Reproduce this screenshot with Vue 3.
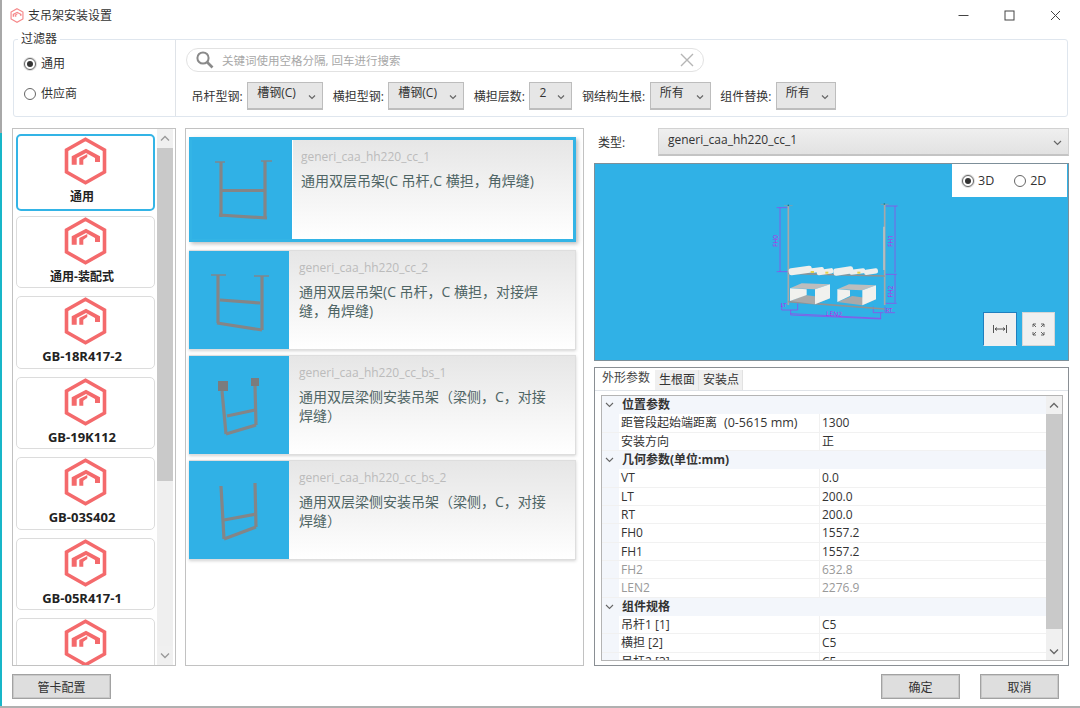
<template>
  <div class="window">
    <i class="edge-top"></i>
    <i class="edge-side"></i>
    <i class="edge-bottom"></i>

    <svg width="0" height="0" class="defs">
      <symbol id="logo" viewBox="0 0 43 48">
        <polygon points="21.5,2.3 40.5,13 40.5,35 21.5,45.7 2.5,35 2.5,13" fill="none" stroke="#f46a6c" stroke-width="3.6" />
        <polygon points="7.7,19.3 22,11.7 36,19.3 36,25 31,25 31,21 22,16 12.7,21 12.7,27.7 7.7,27.7" fill="#f46a6c" />
        <polygon points="15.3,21 23.3,17 23.3,20 19.3,22.7 19.3,27.7 15.3,27.7" fill="#f46a6c" />
      </symbol>
    </svg>

    <header class="titlebar">
      <svg class="title-icon" width="14" height="15"><use href="#logo" /></svg>
      <span class="title-text">支吊架安装设置</span>
      <div class="win-controls">
        <svg width="11" height="11" viewBox="0 0 11 11"><path d="M0.5 5.5h10" stroke="#444" fill="none" /></svg>
        <svg width="11" height="11" viewBox="0 0 11 11"><rect x="1" y="1" width="9" height="9" stroke="#444" fill="none" /></svg>
        <svg width="11" height="11" viewBox="0 0 11 11"><path d="M1 1l9 9M10 1l-9 9" stroke="#444" fill="none" /></svg>
      </div>
    </header>

    <section class="filter">
      <span class="legend">过滤器</span>
      <div class="filter-left">
        <label class="radio-row"><span class="radio checked"></span>通用</label>
        <label class="radio-row"><span class="radio"></span>供应商</label>
      </div>
      <div class="filter-right">
        <div class="search">
          <svg width="20" height="20" viewBox="0 0 20 20" class="search-icon">
            <circle cx="8" cy="8" r="5.6" fill="none" stroke="#8a8a8a" stroke-width="2" />
            <path d="M12 12l5.5 5.5" stroke="#8a8a8a" stroke-width="2.6" fill="none" />
          </svg>
          <span class="placeholder">关键词使用空格分隔, 回车进行搜索</span>
          <svg width="14" height="14" viewBox="0 0 14 14" class="clear-icon">
            <path d="M1 1l12 12M13 1l-12 12" stroke="#b5b5b5" stroke-width="1.4" fill="none" />
          </svg>
        </div>
        <div class="combos">
          <div v-for="c in combos" :key="c.label" class="combo-item">
            <span class="combo-label">{{ c.label }}</span>
            <div class="combo" :class="c.cls">
              <span>{{ c.value }}</span>
              <svg width="8" height="6" viewBox="0 0 8 6"><path d="M1 1.5l3 3 3-3" stroke="#666" fill="none" stroke-width="1.2" /></svg>
            </div>
          </div>
        </div>
      </div>
    </section>

    <main class="content">
      <aside class="vendor-panel">
        <div class="vendor-list">
          <div v-for="(v, i) in vendors" :key="i" class="vendor" :class="{ active: i === 0 }">
            <svg class="vendor-logo" width="43" height="48"><use href="#logo" /></svg>
            <span class="vendor-name" :class="{ code: v.startsWith('GB') }">{{ v }}</span>
          </div>
        </div>
        <div class="scrollbar">
          <div class="sb-btn">
            <svg width="10" height="7" viewBox="0 0 10 7"><path d="M1 5.5l4-4 4 4" stroke="#999" fill="none" stroke-width="1.3" /></svg>
          </div>
          <div class="sb-thumb vendor-thumb"></div>
          <div class="sb-track"></div>
          <div class="sb-btn">
            <svg width="10" height="7" viewBox="0 0 10 7"><path d="M1 1.5l4 4 4-4" stroke="#999" fill="none" stroke-width="1.3" /></svg>
          </div>
        </div>
      </aside>

      <section class="card-panel">
        <article v-for="(c, i) in cards" :key="c.code" class="card" :class="{ selected: i === 0 }">
          <div class="thumb">
            <svg width="100" height="100" viewBox="0 0 100 100">
              <g fill="none" stroke="#848587">
                <path v-for="(p, j) in c.thin" :key="j" :d="p" stroke-width="1.4" />
                <path v-for="(p, j) in c.thick" :key="'t' + j" :d="p" stroke-width="3.2" />
              </g>
              <rect v-for="(r, j) in c.plates" :key="'r' + j" :x="r[0]" :y="r[1]" :width="r[2]" :height="r[3]" fill="#7b7c7e" />
            </svg>
          </div>
          <div class="card-body">
            <div class="card-code">{{ c.code }}</div>
            <div class="card-title">{{ c.title }}</div>
          </div>
        </article>
      </section>

      <section class="detail">
        <div class="type-row">
          <span class="type-label">类型:</span>
          <div class="type-select">
            <span>generi_caa_hh220_cc_1</span>
            <svg width="9" height="6" viewBox="0 0 9 6"><path d="M1 1l3.5 3.5L8 1" stroke="#666" fill="none" stroke-width="1.2" /></svg>
          </div>
        </div>

        <div class="preview">
          <svg class="scene" width="140" height="130" viewBox="0 0 420 390">
            <g fill="none" stroke="#c21fe8" stroke-width="1.6">
              <path d="M50 38h35M60 38v192M50 230h35" />
              <path d="M375 33h38M405 33v200M375 238h35M405 238v85M375 325h35" />
              <path d="M65 325v20h48v-20M340 335v18h30M375 335v18h30" />
              <path d="M92 345v15l270 12v-18M92 356l270 14" />
            </g>
            <text x="54" y="138" class="dim" transform="rotate(-90 54 138)" text-anchor="middle">FH0</text>
            <text x="400" y="138" class="dim" transform="rotate(-90 400 138)" text-anchor="middle">FH1</text>
            <text x="400" y="290" class="dim" transform="rotate(-90 400 290)" text-anchor="middle">FH2</text>
            <text x="222" y="364" class="dim" transform="rotate(3 222 364)" text-anchor="middle">LEN2</text>
            <text x="62" y="335" class="dim small">LT</text>
            <text x="378" y="352" class="dim small">RT</text>

            <path d="M85 32V330" stroke="#a8a8a8" stroke-width="5" />
            <path d="M374 28V330" stroke="#a8a8a8" stroke-width="5" />
            <path d="M372 95v130" stroke="#bfbfbf" stroke-width="5" />
            <path d="M72 32h26M362 28h24" stroke="#9a9a9a" stroke-width="2" />
            <circle cx="85" cy="31" r="2.5" fill="#0c7c86" />
            <circle cx="373" cy="27" r="2.5" fill="#0c7c86" />
            <path d="M85 235L374 243" stroke="#929292" stroke-width="5" />
            <path d="M85 320L374 342" stroke="#929292" stroke-width="5" />

            <g fill="#efefec">
              <rect x="86" y="216" width="70" height="21" rx="8" transform="rotate(-8 120 226)" />
              <rect x="150" y="218" width="42" height="14" rx="6" transform="rotate(-8 170 225)" />
              <rect x="170" y="222" width="50" height="16" rx="6" transform="rotate(-8 195 230)" />
              <rect x="220" y="217" width="60" height="22" rx="8" transform="rotate(-8 250 228)" />
              <rect x="268" y="222" width="48" height="15" rx="6" transform="rotate(-8 292 230)" />
              <rect x="312" y="222" width="42" height="16" rx="6" transform="rotate(-8 332 230)" />
            </g>
            <g fill="#e6d24a">
              <rect x="152" y="228" width="10" height="6" />
              <rect x="196" y="230" width="9" height="6" />
              <rect x="292" y="230" width="9" height="6" />
            </g>

            <g>
              <polygon points="90,280 125,265 210,268 165,283" fill="#bdbdbd" />
              <polygon points="90,318 135,300 210,310 165,328" fill="#a9a9a9" />
              <polygon points="90,280 140,283 140,300 90,318" fill="#f1f1ee" />
              <polygon points="165,283 210,268 210,310 165,328" fill="#f1f1ee" />
            </g>
            <g transform="translate(142 3)">
              <polygon points="90,280 125,265 206,268 165,283" fill="#bdbdbd" />
              <polygon points="90,318 135,300 206,310 165,328" fill="#a9a9a9" />
              <polygon points="90,280 128,283 128,300 90,318" fill="#f1f1ee" />
              <polygon points="165,283 206,268 206,310 165,328" fill="#f1f1ee" />
            </g>
          </svg>

          <div class="view-switch">
            <label class="radio-row"><span class="radio checked"></span>3D</label>
            <label class="radio-row"><span class="radio"></span>2D</label>
          </div>
          <div class="view-tools">
            <button class="tool first">
              <svg width="14" height="10" viewBox="0 0 14 10"><path d="M0.5 1v8M13.5 1v8M2 5h10M4 3.5L2 5l2 1.5M10 3.5L12 5l-2 1.5" stroke="#444" fill="none" stroke-width="0.9" /></svg>
            </button>
            <button class="tool">
              <svg width="13" height="13" viewBox="0 0 13 13"><path d="M1 4V1h3M1 1l3 3M12 4V1H9M12 1L9 4M1 9v3h3M1 12l3-3M12 9v3H9M12 12L9 9" stroke="#555" fill="none" stroke-width="0.9" /></svg>
            </button>
          </div>
        </div>

        <div class="params">
          <div class="tabs">
            <span class="tab current">外形参数</span>
            <span class="tab">生根面</span>
            <span class="tab">安装点</span>
          </div>
          <div class="grid-box">
            <div class="grid">
              <template v-for="(r, i) in rows" :key="i">
                <div v-if="r.group" class="row group">
                  <span class="gutter">
                    <svg width="9" height="6" viewBox="0 0 9 6"><path d="M1 1l3.5 3.5L8 1" stroke="#666" fill="none" stroke-width="1.1" /></svg>
                  </span>
                  <span class="group-name">{{ r.group }}</span>
                </div>
                <div v-else class="row" :class="{ muted: r.muted }">
                  <span class="gutter"></span>
                  <span class="cell name">{{ r.name }}<span v-if="r.note" class="note">{{ r.note }}</span></span>
                  <span class="cell value">{{ r.value }}</span>
                </div>
              </template>
            </div>
            <div class="scrollbar grid-scroll">
              <div class="sb-btn small">
                <svg width="10" height="7" viewBox="0 0 10 7"><path d="M1 5.5l4-4 4 4" stroke="#666" fill="none" stroke-width="1.3" /></svg>
              </div>
              <div class="sb-thumb grid-thumb"></div>
              <div class="sb-track"></div>
              <div class="sb-btn small">
                <svg width="10" height="7" viewBox="0 0 10 7"><path d="M1 1.5l4 4 4-4" stroke="#666" fill="none" stroke-width="1.3" /></svg>
              </div>
            </div>
          </div>
        </div>
      </section>
    </main>

    <footer class="footer">
      <button class="btn wide">管卡配置</button>
      <div class="footer-right">
        <button class="btn">确定</button>
        <button class="btn">取消</button>
      </div>
    </footer>
  </div>
</template>

<script setup>
const combos = [
  { label: '吊杆型钢:', value: '槽钢(C)', cls: 'w76' },
  { label: '横担型钢:', value: '槽钢(C)', cls: 'w76' },
  { label: '横担层数:', value: '2', cls: 'w43' },
  { label: '钢结构生根:', value: '所有', cls: 'w61' },
  { label: '组件替换:', value: '所有', cls: 'w60' }
]

const vendors = ['通用', '通用-装配式', 'GB-18R417-2', 'GB-19K112', 'GB-03S402', 'GB-05R417-1', '']

const cards = [
  {
    code: 'generi_caa_hh220_cc_1',
    title: '通用双层吊架(C 吊杆,C 横担，角焊缝)',
    thin: ['M23 22h10', 'M69 21h11'],
    thick: ['M29 22V77', 'M73 21V79', 'M30 50.5h42', 'M27 75l48 3'],
    plates: []
  },
  {
    code: 'generi_caa_hh220_cc_2',
    title: '通用双层吊架(C 吊杆，C 横担，对接焊缝，角焊缝)',
    thin: ['M22 24h15', 'M65 25h15'],
    thick: ['M29 24V72', 'M73 25V79', 'M31 49l40 3', 'M28 72l45 7'],
    plates: []
  },
  {
    code: 'generi_caa_hh220_cc_bs_1',
    title: '通用双层梁侧安装吊架（梁侧，C，对接焊缝）',
    thin: [],
    thick: ['M33 35L37 78', 'M66 30L67 69', 'M38 60L66 54', 'M37 78L67 69'],
    plates: [[29, 25, 10, 10], [62, 22, 8, 8]]
  },
  {
    code: 'generi_caa_hh220_cc_bs_2',
    title: '通用双层梁侧安装吊架（梁侧，C，对接焊缝）',
    thin: [],
    thick: ['M32 25L35 78', 'M66 22L67 66', 'M35 59L67 53', 'M35 78L67 66'],
    plates: []
  }
]

const rows = [
  { group: '位置参数' },
  { name: '距管段起始端距离', note: '(0-5615 mm)', value: '1300' },
  { name: '安装方向', value: '正' },
  { group: '几何参数(单位:mm)' },
  { name: 'VT', value: '0.0' },
  { name: 'LT', value: '200.0' },
  { name: 'RT', value: '200.0' },
  { name: 'FH0', value: '1557.2' },
  { name: 'FH1', value: '1557.2' },
  { name: 'FH2', value: '632.8', muted: true },
  { name: 'LEN2', value: '2276.9', muted: true },
  { group: '组件规格' },
  { name: '吊杆1 [1]', value: 'C5' },
  { name: '横担 [2]', value: 'C5' },
  { name: '吊杆2 [3]', value: 'C5' }
]
</script>

<style>
html, body {
  margin: 0;
  background: #fff;
  overflow: hidden;
}
</style>

<style scoped>
.window {
  position: relative;
  width: 1080px;
  height: 708px;
  overflow: hidden;
  background: #fff;
  font-family: "Open Sans", "Noto Sans CJK SC", sans-serif;
  font-size: 12px;
  color: #333;
  box-sizing: border-box;
  padding-left: 12px;
}

.edge-top, .edge-side, .edge-bottom {
  position: absolute;
  left: 0;
}
.edge-top { top: 0; width: 2px; height: 133px; background: #a8a8a8; }
.edge-side { top: 133px; width: 2px; height: 573px; background: #18b6c8; }
.edge-bottom { top: 706px; width: 100%; height: 2px; background: #b0b0b0; }

.defs { position: absolute; }

.titlebar {
  height: 30px;
  margin-left: -2px;
  display: flex;
  align-items: center;
}
.title-icon { margin-right: 4px; opacity: 0.8; }
.title-text { color: #333; }
.win-controls {
  margin-left: auto;
  display: flex;
  gap: 35px;
  padding-right: 19px;
}

.filter {
  position: relative;
  margin: 9px 12px 0 1px;
  height: 78px;
  display: flex;
  border: 1px solid #dfe6ee;
  border-radius: 3px;
  box-sizing: border-box;
}
.legend {
  position: absolute;
  top: -8px;
  left: 4px;
  padding: 0 3px;
  background: #fff;
  line-height: 14px;
}
.filter-left {
  width: 162px;
  box-sizing: border-box;
  border-right: 1px solid #dfe3e8;
  padding: 15px 0 0 10px;
  display: flex;
  flex-direction: column;
  gap: 12px;
}
.radio-row {
  display: flex;
  align-items: center;
  gap: 5px;
  height: 18px;
  line-height: 18px;
}
.radio {
  width: 12px;
  height: 12px;
  border: 1px solid #666;
  border-radius: 50%;
  background: #fff;
  box-sizing: border-box;
  position: relative;
}
.radio.checked {
  box-shadow: 0 0 0 1px #ddd;
}
.radio.checked::after {
  content: "";
  position: absolute;
  left: 2px;
  top: 2px;
  width: 6px;
  height: 6px;
  border-radius: 50%;
  background: #333;
}

.filter-right {
  flex: 1;
  padding: 8px 0 0 10px;
}
.search {
  width: 518px;
  height: 24px;
  box-sizing: border-box;
  border: 1px solid #e2e2e2;
  border-radius: 12px;
  display: flex;
  align-items: center;
  padding-left: 8px;
  padding-right: 9px;
}
.search-icon { flex: none; }
.placeholder {
  margin-left: 7px;
  color: #a8a8a8;
  font-size: 11.5px;
}
.clear-icon { margin-left: auto; }

.combos {
  display: flex;
  margin-top: 10px;
  padding-left: 5.5px;
  gap: 9.5px;
}
.combo-item {
  display: flex;
  align-items: center;
  gap: 4.5px;
}
.combo-label { white-space: nowrap; }
.combo {
  height: 28px;
  box-sizing: border-box;
  border: 1px solid #bdbdbd;
  border-bottom-width: 2px;
  background: #e6e6e6;
  display: flex;
  justify-content: space-between;
  padding: 1px 6px 0 9px;
  line-height: 18px;
}
.combo svg { margin-top: 10px; }
.w76 { width: 76px; }
.w43 { width: 43px; }
.w61 { width: 61px; }
.w60 { width: 60px; }

.content {
  margin-top: 11px;
  height: 538px;
  display: flex;
  gap: 9px;
}

.vendor-panel {
  width: 164px;
  box-sizing: border-box;
  border: 1px solid #c2c2c2;
  display: flex;
  overflow: hidden;
}
.vendor-list {
  width: 144px;
  padding: 5px 0 0 3px;
  box-sizing: border-box;
  overflow: hidden;
}
.vendor {
  height: 72.4px;
  width: 139px;
  margin-bottom: 8px;
  box-sizing: border-box;
  border: 1px solid #dcdcdc;
  border-radius: 5px;
  display: flex;
  flex-direction: column;
  align-items: center;
}
.vendor.active {
  height: 77px;
  margin-bottom: 5px;
  border: 2px solid #33b4e6;
  padding-top: 1px;
}
.vendor-logo { flex: none; }
.vendor-name {
  margin: 3px 7px 0 0;
  font-weight: 700;
  color: #222;
  line-height: 17px;
  white-space: nowrap;
}
.vendor-name.code { font-size: 13px; }

.scrollbar {
  width: 16px;
  flex: none;
  background: #efefef;
  display: flex;
  flex-direction: column;
}
.sb-btn {
  height: 19px;
  flex: none;
  display: flex;
  align-items: center;
  justify-content: center;
  background: #f0f0f0;
}
.sb-thumb { background: #c9c9c9; }
.vendor-thumb { height: 333px; }
.sb-track { flex: 1; }

.card-panel {
  width: 399px;
  box-sizing: border-box;
  border: 1px solid #c2c2c2;
  padding: 8px 0 0 3px;
}
.card {
  width: 387px;
  height: 100px;
  box-sizing: border-box;
  margin-bottom: 5px;
  display: flex;
  border: 1px solid #dedede;
  border-left: none;
  background: linear-gradient(#e6e6e6, #fff);
  box-shadow: 0 1px 3px rgba(0, 0, 0, 0.18);
}
.card.selected {
  height: 105px;
  margin-bottom: 8px;
  border: 3px solid #33b4e6;
  box-shadow: 2px 2px 4px rgba(0, 0, 0, 0.25);
}
.thumb {
  width: 100px;
  flex: none;
  background: #30b1e6;
}
.card.selected .thumb {
  border-right: 1px solid #fff;
}
.card-body {
  padding: 8px 22px 0 10px;
}
.card.selected .card-body {
  padding-left: 8px;
}
.card-code {
  color: #bbb;
  font-size: 12px;
  line-height: 18px;
  white-space: nowrap;
}
.card-title {
  margin-top: 5px;
  font-size: 14px;
  line-height: 19px;
  color: #4f6565;
}

.detail {
  width: 475px;
  margin-left: 1px;
}
.type-row {
  height: 28px;
  display: flex;
  align-items: center;
}
.type-label {
  margin-left: 4px;
  width: 60px;
}
.type-select {
  flex: 1;
  height: 28px;
  box-sizing: border-box;
  border: 1px solid #d2d2d2;
  border-bottom: 2px solid #c4c4c4;
  background: linear-gradient(#efefef, #e2e2e2);
  display: flex;
  justify-content: space-between;
  padding: 1px 6px 0 9px;
  line-height: 20px;
  color: #333;
}
.type-select svg { margin-top: 10px; }

.preview {
  position: relative;
  margin-top: 7px;
  height: 198px;
  box-sizing: border-box;
  border: 1px solid #7d8f99;
  background: #30b1e6;
}
.scene {
  position: absolute;
  left: 165px;
  top: 31px;
}
.dim {
  fill: #c21fe8;
  font-size: 20px;
}
.dim.small { font-size: 16px; }
.view-switch {
  position: absolute;
  top: 0;
  right: 1px;
  width: 115px;
  height: 33px;
  background: #fff;
  box-sizing: border-box;
  display: flex;
  align-items: center;
  gap: 20px;
  padding-left: 10px;
  font-size: 12.5px;
}
.view-switch .radio-row { gap: 4px; }
.view-tools {
  position: absolute;
  right: 13px;
  top: 148px;
  display: flex;
  gap: 5px;
}
.tool {
  width: 33px;
  height: 34px;
  padding: 0;
  background: #f0f0f0;
  border: 1px solid #d6d6d6;
  display: flex;
  align-items: center;
  justify-content: center;
}
.tool.first {
  width: 34px;
  border-color: #1f7fbf #1f7fbf #f0f0f0 #1f7fbf;
}

.params {
  margin-top: 6px;
  height: 299px;
  box-sizing: border-box;
  border: 1px solid #8a8f94;
}
.tabs {
  height: 22px;
  display: flex;
  align-items: flex-end;
  padding-left: 2px;
  border-bottom: 1px solid #dfe3e8;
}
.tab {
  height: 20px;
  line-height: 20px;
  padding: 0 4px;
  background: #f0f0f0;
  border-right: 1px solid #e2e2e2;
  box-sizing: border-box;
  width: 44px;
  text-align: center;
  white-space: nowrap;
}
.tab.current {
  width: 58px;
  height: 22px;
  line-height: 20px;
  background: #fff;
  padding: 0;
  border-right: none;
  color: #444;
}
.grid-box {
  margin: 4px 5px 0 6px;
  height: 266px;
  box-sizing: border-box;
  border: 1px solid #b4b4b4;
  display: flex;
  overflow: hidden;
}
.grid {
  flex: 1;
  overflow: hidden;
}
.row {
  display: flex;
  height: 18.35px;
  line-height: 18px;
  box-sizing: border-box;
  border-bottom: 1px solid #f1f1f1;
  color: #333;
}
.row.muted { color: #999; }
.row.group {
  background: #f3f6fb;
  border-bottom: none;
}
.gutter {
  width: 17px;
  flex: none;
  background: #f3f6fb;
  display: flex;
  align-items: center;
  justify-content: center;
  padding-right: 2px;
  box-sizing: border-box;
}
.group-name {
  font-weight: 700;
  margin-left: 3px;
  color: #333;
}
.cell {
  white-space: nowrap;
  overflow: hidden;
  box-sizing: border-box;
}
.name {
  width: 201px;
  padding-left: 2px;
  border-right: 1px solid #f1f1f1;
}
.note {
  margin-left: 7px;
  font-size: 12.5px;
}
.value { padding-left: 2px; flex: 1; }

.grid-scroll {
  background: #f0f0f0;
}
.sb-btn.small { height: 18px; }
.grid-thumb { height: 215px; }

.footer {
  margin-top: 8px;
  display: flex;
  justify-content: space-between;
  padding-right: 21px;
}
.footer-right {
  display: flex;
  gap: 20px;
}
.btn {
  width: 79px;
  height: 25px;
  padding: 0;
  font: inherit;
  color: #333;
  background: #dedede;
  border: 1px solid #a2a2a2;
  box-shadow: inset 0 0 0 1px #c8c8c8;
}
.btn.wide { width: 99px; }
</style>
